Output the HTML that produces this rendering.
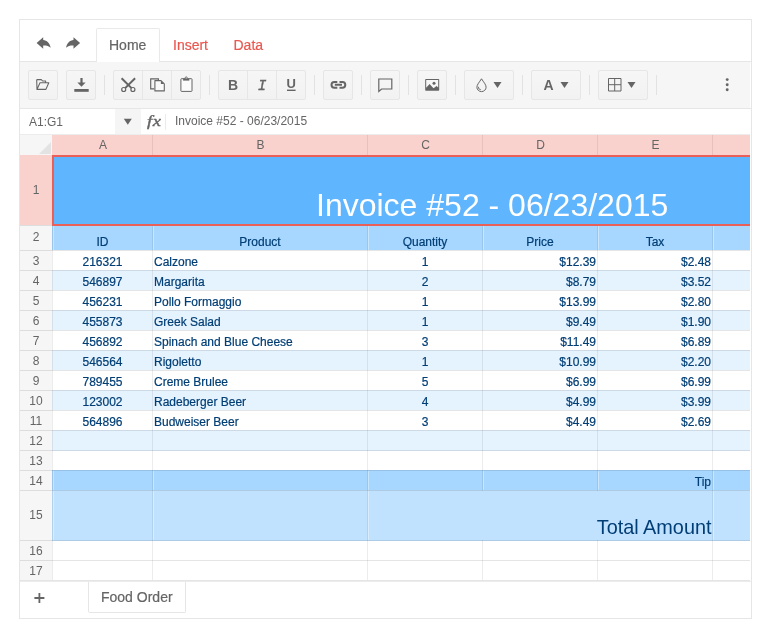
<!DOCTYPE html>
<html><head><meta charset="utf-8"><title>Spreadsheet</title>
<style>
html,body{margin:0;padding:0;background:#fff;}
body{width:770px;height:641px;position:relative;overflow:hidden;font-family:"Liberation Sans",sans-serif;font-size:14px;color:#656565;}
.abs{position:absolute;box-sizing:border-box;}
#ss{left:19px;top:19px;width:733px;height:600px;border:1px solid #e6e6e6;background:#fff;}
#tabline{left:20px;top:61px;width:731px;height:1px;background:#e6e6e6;}
#hometab{left:96px;top:28px;width:64px;height:34px;border:1px solid #e9e9e9;border-bottom:0;border-radius:2px 2px 0 0;background:#fff;}
.tabtxt{-webkit-text-stroke:0.2px currentColor;top:35px;height:20px;line-height:20px;font-size:14px;white-space:nowrap;}
#toolbar{left:20px;top:62px;width:730px;height:46px;background:#f6f6f6;}
#tbline{left:20px;top:108px;width:731px;height:1px;background:#e6e6e6;}
.btn{top:70px;height:30px;width:30px;border:1px solid #e6e6e6;border-radius:2px;background:linear-gradient(#f6f6f6,#f2f2f2);}
.btn svg{position:absolute;left:0;top:0;}
.sep{top:75px;width:1px;height:20px;background:#e2e2e2;}
.cell{font-size:12px;line-height:20px;white-space:nowrap;color:#003e75;overflow:hidden;-webkit-text-stroke:0.2px #003e75;}
.hdr{font-size:12px;color:#656565;text-align:center;background:#f6f6f6;}
.hsel{background:#f9d1cd;}
.gl{background:rgba(0,0,0,.10);}
</style></head><body>
<div id="root" style="position:absolute;left:0;top:0;width:770px;height:641px;will-change:transform;">
<div id="ss" class="abs"></div>
<div id="tabline" class="abs"></div>
<div id="hometab" class="abs"></div>
<div class="abs tabtxt" style="left:109px;color:#656565;">Home</div>
<div class="abs tabtxt" style="left:173px;color:#e9574f;">Insert</div>
<div class="abs tabtxt" style="left:233.5px;color:#e9574f;">Data</div>
<div id="toolbar" class="abs"></div>
<div id="tbline" class="abs"></div>

<div class="abs btn" style="left:28px;width:30px;"></div>
<div class="abs btn" style="left:66px;width:30px;"></div>
<div class="abs btn" style="left:113px;width:30px;border-radius:2px 0 0 2px;"></div>
<div class="abs btn" style="left:142px;width:30px;border-radius:0;"></div>
<div class="abs btn" style="left:171px;width:30px;border-radius:0 2px 2px 0;"></div>
<div class="abs btn" style="left:218px;width:30px;border-radius:2px 0 0 2px;"></div>
<div class="abs btn" style="left:247px;width:30px;border-radius:0;"></div>
<div class="abs btn" style="left:276px;width:30px;border-radius:0 2px 2px 0;"></div>
<div class="abs btn" style="left:323px;width:30px;"></div>
<div class="abs btn" style="left:370px;width:30px;"></div>
<div class="abs btn" style="left:417px;width:30px;"></div>
<div class="abs btn" style="left:464px;width:50px;"></div>
<div class="abs btn" style="left:531px;width:50px;"></div>
<div class="abs btn" style="left:598px;width:50px;"></div>
<div class="abs sep" style="left:104px"></div>
<div class="abs sep" style="left:209px"></div>
<div class="abs sep" style="left:314px"></div>
<div class="abs sep" style="left:361px"></div>
<div class="abs sep" style="left:408px"></div>
<div class="abs sep" style="left:455px"></div>
<div class="abs sep" style="left:522px"></div>
<div class="abs sep" style="left:589px"></div>
<div class="abs sep" style="left:656px"></div>
<div class="abs" style="left:29px;top:110px;height:25px;line-height:25px;font-size:12px;color:#656565;">A1:G1</div>
<div class="abs" style="left:115px;top:109px;width:26px;height:25px;background:#f5f5f5;"></div>
<div class="abs" style="left:146.5px;top:110.4px;transform:scale(1.06,.87);letter-spacing:.5px;transform-origin:0 0;height:25px;line-height:25px;font-size:17.5px;font-style:italic;-webkit-text-stroke:0.45px #656565;color:#656565;font-family:'Liberation Serif',serif;">fx</div>
<div class="abs" style="left:165px;top:114px;width:1px;height:16px;background:#ebebeb;"></div>
<div class="abs" style="left:175px;top:109px;height:25px;line-height:25px;font-size:12px;color:#656565;white-space:nowrap;">Invoice #52 - 06/23/2015</div>
<div class="abs" style="left:20px;top:134px;width:730px;height:1px;background:#ececec;"></div>
<div class="abs" style="left:20px;top:135px;width:32px;height:20px;background:#f6f6f6;"></div>
<svg class="abs" style="left:20px;top:135px" width="32" height="20"><path d="M31 7 V19 H19 Z" fill="#e3e3e3"/></svg>
<div class="abs hdr hsel" style="left:52px;top:135px;width:100px;height:20px;line-height:20px;padding-left:2px;">A</div>
<div class="abs hdr hsel" style="left:152px;top:135px;width:215px;height:20px;line-height:20px;padding-left:2px;">B</div>
<div class="abs hdr hsel" style="left:367px;top:135px;width:115px;height:20px;line-height:20px;padding-left:2px;">C</div>
<div class="abs hdr hsel" style="left:482px;top:135px;width:115px;height:20px;line-height:20px;padding-left:2px;">D</div>
<div class="abs hdr hsel" style="left:597px;top:135px;width:115px;height:20px;line-height:20px;padding-left:2px;">E</div>
<div class="abs hdr hsel" style="left:712px;top:135px;width:38px;height:20px;line-height:20px;padding-left:2px;"></div>
<div class="abs hdr hsel" style="left:20px;top:155px;width:32px;height:70px;line-height:70px;">1</div>
<div class="abs hdr" style="left:20px;top:225px;width:32px;height:25px;line-height:25px;">2</div>
<div class="abs hdr" style="left:20px;top:250px;width:32px;height:20px;line-height:22px;">3</div>
<div class="abs hdr" style="left:20px;top:270px;width:32px;height:20px;line-height:22px;">4</div>
<div class="abs hdr" style="left:20px;top:290px;width:32px;height:20px;line-height:22px;">5</div>
<div class="abs hdr" style="left:20px;top:310px;width:32px;height:20px;line-height:22px;">6</div>
<div class="abs hdr" style="left:20px;top:330px;width:32px;height:20px;line-height:22px;">7</div>
<div class="abs hdr" style="left:20px;top:350px;width:32px;height:20px;line-height:22px;">8</div>
<div class="abs hdr" style="left:20px;top:370px;width:32px;height:20px;line-height:22px;">9</div>
<div class="abs hdr" style="left:20px;top:390px;width:32px;height:20px;line-height:22px;">10</div>
<div class="abs hdr" style="left:20px;top:410px;width:32px;height:20px;line-height:22px;">11</div>
<div class="abs hdr" style="left:20px;top:430px;width:32px;height:20px;line-height:22px;">12</div>
<div class="abs hdr" style="left:20px;top:450px;width:32px;height:20px;line-height:22px;">13</div>
<div class="abs hdr" style="left:20px;top:470px;width:32px;height:20px;line-height:22px;">14</div>
<div class="abs hdr" style="left:20px;top:490px;width:32px;height:50px;line-height:50px;">15</div>
<div class="abs hdr" style="left:20px;top:540px;width:32px;height:20px;line-height:22px;">16</div>
<div class="abs hdr" style="left:20px;top:560px;width:32px;height:20px;line-height:22px;">17</div>
<div class="abs" style="left:52px;top:155px;width:698px;height:71px;background:#60b5ff;"></div>
<div class="abs" style="left:52px;top:225px;width:698px;height:26px;background:#a7d6ff;"></div>
<div class="abs" style="left:52px;top:250px;width:698px;height:20px;background:#fff;"></div>
<div class="abs" style="left:52px;top:270px;width:698px;height:21px;background:#e5f3ff;"></div>
<div class="abs" style="left:52px;top:290px;width:698px;height:20px;background:#fff;"></div>
<div class="abs" style="left:52px;top:310px;width:698px;height:21px;background:#e5f3ff;"></div>
<div class="abs" style="left:52px;top:330px;width:698px;height:20px;background:#fff;"></div>
<div class="abs" style="left:52px;top:350px;width:698px;height:21px;background:#e5f3ff;"></div>
<div class="abs" style="left:52px;top:370px;width:698px;height:20px;background:#fff;"></div>
<div class="abs" style="left:52px;top:390px;width:698px;height:21px;background:#e5f3ff;"></div>
<div class="abs" style="left:52px;top:410px;width:698px;height:20px;background:#fff;"></div>
<div class="abs" style="left:52px;top:430px;width:698px;height:21px;background:#e5f3ff;"></div>
<div class="abs" style="left:52px;top:470px;width:698px;height:21px;background:#a7d6ff;"></div>
<div class="abs" style="left:52px;top:490px;width:698px;height:51px;background:#c1e2ff;"></div>
<div class="abs gl" style="left:20px;top:225px;width:730px;height:1px;"></div>
<div class="abs gl" style="left:20px;top:250px;width:730px;height:1px;"></div>
<div class="abs gl" style="left:20px;top:270px;width:730px;height:1px;"></div>
<div class="abs gl" style="left:20px;top:290px;width:730px;height:1px;"></div>
<div class="abs gl" style="left:20px;top:310px;width:730px;height:1px;"></div>
<div class="abs gl" style="left:20px;top:330px;width:730px;height:1px;"></div>
<div class="abs gl" style="left:20px;top:350px;width:730px;height:1px;"></div>
<div class="abs gl" style="left:20px;top:370px;width:730px;height:1px;"></div>
<div class="abs gl" style="left:20px;top:390px;width:730px;height:1px;"></div>
<div class="abs gl" style="left:20px;top:410px;width:730px;height:1px;"></div>
<div class="abs gl" style="left:20px;top:430px;width:730px;height:1px;"></div>
<div class="abs gl" style="left:20px;top:450px;width:730px;height:1px;"></div>
<div class="abs gl" style="left:20px;top:470px;width:730px;height:1px;"></div>
<div class="abs gl" style="left:20px;top:490px;width:730px;height:1px;"></div>
<div class="abs gl" style="left:20px;top:540px;width:730px;height:1px;"></div>
<div class="abs gl" style="left:20px;top:560px;width:730px;height:1px;"></div>
<div class="abs gl" style="left:20px;top:580px;width:730px;height:1px;"></div>
<div class="abs" style="background:rgba(0,0,0,.075);left:52px;top:155px;width:1px;height:425px;"></div>
<div class="abs" style="left:53px;top:226px;width:1px;height:24px;background:rgba(255,255,255,.4)"></div>
<div class="abs" style="left:53px;top:471px;width:1px;height:19px;background:rgba(255,255,255,.4)"></div>
<div class="abs" style="left:53px;top:491px;width:1px;height:49px;background:rgba(255,255,255,.4)"></div>
<div class="abs" style="background:rgba(0,0,0,.075);left:152px;top:135px;width:1px;height:445px;"></div>
<div class="abs" style="left:153px;top:226px;width:1px;height:24px;background:rgba(255,255,255,.4)"></div>
<div class="abs" style="left:153px;top:471px;width:1px;height:19px;background:rgba(255,255,255,.4)"></div>
<div class="abs" style="left:153px;top:491px;width:1px;height:49px;background:rgba(255,255,255,.4)"></div>
<div class="abs" style="background:rgba(0,0,0,.075);left:367px;top:135px;width:1px;height:445px;"></div>
<div class="abs" style="left:368px;top:226px;width:1px;height:24px;background:rgba(255,255,255,.4)"></div>
<div class="abs" style="left:368px;top:471px;width:1px;height:19px;background:rgba(255,255,255,.4)"></div>
<div class="abs" style="left:368px;top:491px;width:1px;height:49px;background:rgba(255,255,255,.4)"></div>
<div class="abs" style="background:rgba(0,0,0,.075);left:482px;top:135px;width:1px;height:445px;"></div>
<div class="abs" style="left:483px;top:226px;width:1px;height:24px;background:rgba(255,255,255,.4)"></div>
<div class="abs" style="left:483px;top:471px;width:1px;height:19px;background:rgba(255,255,255,.4)"></div>
<div class="abs" style="left:483px;top:491px;width:1px;height:49px;background:rgba(255,255,255,.4)"></div>
<div class="abs" style="background:rgba(0,0,0,.075);left:597px;top:135px;width:1px;height:445px;"></div>
<div class="abs" style="left:598px;top:226px;width:1px;height:24px;background:rgba(255,255,255,.4)"></div>
<div class="abs" style="left:598px;top:471px;width:1px;height:19px;background:rgba(255,255,255,.4)"></div>
<div class="abs" style="left:598px;top:491px;width:1px;height:49px;background:rgba(255,255,255,.4)"></div>
<div class="abs" style="background:rgba(0,0,0,.075);left:712px;top:135px;width:1px;height:445px;"></div>
<div class="abs" style="left:713px;top:226px;width:1px;height:24px;background:rgba(255,255,255,.4)"></div>
<div class="abs" style="left:713px;top:471px;width:1px;height:19px;background:rgba(255,255,255,.4)"></div>
<div class="abs" style="left:713px;top:491px;width:1px;height:49px;background:rgba(255,255,255,.4)"></div>
<div class="abs" style="left:52px;top:155px;width:698px;height:71px;background:#60b5ff;border:2px solid #ea5f57;border-right:0;"></div>
<div class="abs" style="left:316px;top:185px;height:40px;line-height:40px;font-size:32px;color:#fff;white-space:nowrap;">Invoice #52 - 06/23/2015</div>
<div class="abs cell" style="left:53px;top:225px;width:99px;height:25px;text-align:center;padding:0 2px 0 2px;line-height:34px;">ID</div>
<div class="abs cell" style="left:153px;top:225px;width:214px;height:25px;text-align:center;padding:0 2px 0 2px;line-height:34px;">Product</div>
<div class="abs cell" style="left:368px;top:225px;width:114px;height:25px;text-align:center;padding:0 2px 0 2px;line-height:34px;">Quantity</div>
<div class="abs cell" style="left:483px;top:225px;width:114px;height:25px;text-align:center;padding:0 2px 0 2px;line-height:34px;">Price</div>
<div class="abs cell" style="left:598px;top:225px;width:114px;height:25px;text-align:center;padding:0 2px 0 2px;line-height:34px;">Tax</div>
<div class="abs cell" style="left:53px;top:250px;width:99px;height:20px;text-align:center;padding:0 2px 0 2px;line-height:25px;">216321</div>
<div class="abs cell" style="left:153px;top:250px;width:214px;height:20px;text-align:left;padding:0 2px 0 1px;line-height:25px;">Calzone</div>
<div class="abs cell" style="left:368px;top:250px;width:114px;height:20px;text-align:center;padding:0 2px 0 2px;line-height:25px;">1</div>
<div class="abs cell" style="left:483px;top:250px;width:114px;height:20px;text-align:right;padding:0 1px 0 1px;line-height:25px;">$12.39</div>
<div class="abs cell" style="left:598px;top:250px;width:114px;height:20px;text-align:right;padding:0 1px 0 1px;line-height:25px;">$2.48</div>
<div class="abs cell" style="left:53px;top:270px;width:99px;height:20px;text-align:center;padding:0 2px 0 2px;line-height:25px;">546897</div>
<div class="abs cell" style="left:153px;top:270px;width:214px;height:20px;text-align:left;padding:0 2px 0 1px;line-height:25px;">Margarita</div>
<div class="abs cell" style="left:368px;top:270px;width:114px;height:20px;text-align:center;padding:0 2px 0 2px;line-height:25px;">2</div>
<div class="abs cell" style="left:483px;top:270px;width:114px;height:20px;text-align:right;padding:0 1px 0 1px;line-height:25px;">$8.79</div>
<div class="abs cell" style="left:598px;top:270px;width:114px;height:20px;text-align:right;padding:0 1px 0 1px;line-height:25px;">$3.52</div>
<div class="abs cell" style="left:53px;top:290px;width:99px;height:20px;text-align:center;padding:0 2px 0 2px;line-height:25px;">456231</div>
<div class="abs cell" style="left:153px;top:290px;width:214px;height:20px;text-align:left;padding:0 2px 0 1px;line-height:25px;">Pollo Formaggio</div>
<div class="abs cell" style="left:368px;top:290px;width:114px;height:20px;text-align:center;padding:0 2px 0 2px;line-height:25px;">1</div>
<div class="abs cell" style="left:483px;top:290px;width:114px;height:20px;text-align:right;padding:0 1px 0 1px;line-height:25px;">$13.99</div>
<div class="abs cell" style="left:598px;top:290px;width:114px;height:20px;text-align:right;padding:0 1px 0 1px;line-height:25px;">$2.80</div>
<div class="abs cell" style="left:53px;top:310px;width:99px;height:20px;text-align:center;padding:0 2px 0 2px;line-height:25px;">455873</div>
<div class="abs cell" style="left:153px;top:310px;width:214px;height:20px;text-align:left;padding:0 2px 0 1px;line-height:25px;">Greek Salad</div>
<div class="abs cell" style="left:368px;top:310px;width:114px;height:20px;text-align:center;padding:0 2px 0 2px;line-height:25px;">1</div>
<div class="abs cell" style="left:483px;top:310px;width:114px;height:20px;text-align:right;padding:0 1px 0 1px;line-height:25px;">$9.49</div>
<div class="abs cell" style="left:598px;top:310px;width:114px;height:20px;text-align:right;padding:0 1px 0 1px;line-height:25px;">$1.90</div>
<div class="abs cell" style="left:53px;top:330px;width:99px;height:20px;text-align:center;padding:0 2px 0 2px;line-height:25px;">456892</div>
<div class="abs cell" style="left:153px;top:330px;width:214px;height:20px;text-align:left;padding:0 2px 0 1px;line-height:25px;">Spinach and Blue Cheese</div>
<div class="abs cell" style="left:368px;top:330px;width:114px;height:20px;text-align:center;padding:0 2px 0 2px;line-height:25px;">3</div>
<div class="abs cell" style="left:483px;top:330px;width:114px;height:20px;text-align:right;padding:0 1px 0 1px;line-height:25px;">$11.49</div>
<div class="abs cell" style="left:598px;top:330px;width:114px;height:20px;text-align:right;padding:0 1px 0 1px;line-height:25px;">$6.89</div>
<div class="abs cell" style="left:53px;top:350px;width:99px;height:20px;text-align:center;padding:0 2px 0 2px;line-height:25px;">546564</div>
<div class="abs cell" style="left:153px;top:350px;width:214px;height:20px;text-align:left;padding:0 2px 0 1px;line-height:25px;">Rigoletto</div>
<div class="abs cell" style="left:368px;top:350px;width:114px;height:20px;text-align:center;padding:0 2px 0 2px;line-height:25px;">1</div>
<div class="abs cell" style="left:483px;top:350px;width:114px;height:20px;text-align:right;padding:0 1px 0 1px;line-height:25px;">$10.99</div>
<div class="abs cell" style="left:598px;top:350px;width:114px;height:20px;text-align:right;padding:0 1px 0 1px;line-height:25px;">$2.20</div>
<div class="abs cell" style="left:53px;top:370px;width:99px;height:20px;text-align:center;padding:0 2px 0 2px;line-height:25px;">789455</div>
<div class="abs cell" style="left:153px;top:370px;width:214px;height:20px;text-align:left;padding:0 2px 0 1px;line-height:25px;">Creme Brulee</div>
<div class="abs cell" style="left:368px;top:370px;width:114px;height:20px;text-align:center;padding:0 2px 0 2px;line-height:25px;">5</div>
<div class="abs cell" style="left:483px;top:370px;width:114px;height:20px;text-align:right;padding:0 1px 0 1px;line-height:25px;">$6.99</div>
<div class="abs cell" style="left:598px;top:370px;width:114px;height:20px;text-align:right;padding:0 1px 0 1px;line-height:25px;">$6.99</div>
<div class="abs cell" style="left:53px;top:390px;width:99px;height:20px;text-align:center;padding:0 2px 0 2px;line-height:25px;">123002</div>
<div class="abs cell" style="left:153px;top:390px;width:214px;height:20px;text-align:left;padding:0 2px 0 1px;line-height:25px;">Radeberger Beer</div>
<div class="abs cell" style="left:368px;top:390px;width:114px;height:20px;text-align:center;padding:0 2px 0 2px;line-height:25px;">4</div>
<div class="abs cell" style="left:483px;top:390px;width:114px;height:20px;text-align:right;padding:0 1px 0 1px;line-height:25px;">$4.99</div>
<div class="abs cell" style="left:598px;top:390px;width:114px;height:20px;text-align:right;padding:0 1px 0 1px;line-height:25px;">$3.99</div>
<div class="abs cell" style="left:53px;top:410px;width:99px;height:20px;text-align:center;padding:0 2px 0 2px;line-height:25px;">564896</div>
<div class="abs cell" style="left:153px;top:410px;width:214px;height:20px;text-align:left;padding:0 2px 0 1px;line-height:25px;">Budweiser Beer</div>
<div class="abs cell" style="left:368px;top:410px;width:114px;height:20px;text-align:center;padding:0 2px 0 2px;line-height:25px;">3</div>
<div class="abs cell" style="left:483px;top:410px;width:114px;height:20px;text-align:right;padding:0 1px 0 1px;line-height:25px;">$4.49</div>
<div class="abs cell" style="left:598px;top:410px;width:114px;height:20px;text-align:right;padding:0 1px 0 1px;line-height:25px;">$2.69</div>
<div class="abs cell" style="left:598px;top:470px;width:114px;height:20px;text-align:right;padding:0 1px 0 1px;line-height:25px;">Tip</div>
<div class="abs" style="left:369px;top:491px;width:343px;height:49px;background:#c1e2ff;"></div>
<div class="abs" style="left:592px;top:490px;width:120px;height:50px;text-align:right;font-size:19.85px;padding-right:.5px;line-height:74px;color:#003e75;white-space:nowrap;overflow:hidden;">Total Amount</div>
<div class="abs" style="left:88px;top:581px;width:98px;height:32px;border:1px solid #e6e6e6;border-top:0;border-radius:0 0 2px 2px;background:#fff;"></div>
<div class="abs" style="left:20px;top:581px;width:731px;height:1px;background:#ececec;"></div>
<div class="abs" style="left:101px;top:587px;height:20px;line-height:20px;font-size:14px;color:#656565;white-space:nowrap;-webkit-text-stroke:0.2px #656565;">Food Order</div>
<svg class="abs" style="left:0;top:0;pointer-events:none" width="770" height="641" viewBox="0 0 770 641"><path d="M43.2 37.2 L36.6 42.9 L43.2 48.7 L43.2 45.6 C46 45.4 48.6 46 50.7 47.7 C49.6 43 47 40.3 43.2 40 Z" fill="#656565"/><path transform="translate(116.7 0) scale(-1 1)" d="M43.2 37.2 L36.6 42.9 L43.2 48.7 L43.2 45.6 C46 45.4 48.6 46 50.7 47.7 C49.6 43 47 40.3 43.2 40 Z" fill="#656565"/><path d="M37 89.4 L36.7 80.3 Q36.7 79.6 37.4 79.6 L41.3 79.6 L42.6 81 L45.6 81 L45.6 82.6 M37 89.4 L40 82.7 L48.8 82.7 L45.9 89.4 Z" fill="none" stroke="#656565" stroke-width="1.1" stroke-linejoin="round"/><path d="M80.4 78 H82.6 V82.5 H85.6 L81.5 86.7 L77.4 82.5 H80.4 Z" fill="#656565"/><rect x="74.3" y="89" width="14.4" height="2.8" fill="#656565"/><path d="M121.6 78.2 L131.8 88.4 M135.1 78.2 L124.9 88.4" stroke="#656565" stroke-width="2" fill="none"/><circle cx="123.7" cy="89.5" r="2" fill="#f7f7f7" stroke="#656565" stroke-width="1.2"/><circle cx="132.9" cy="89.5" r="2" fill="#f7f7f7" stroke="#656565" stroke-width="1.2"/><path d="M154.2 88.9 H150.7 V78.8 H158.4 V80.2" fill="none" stroke="#656565" stroke-width="1.15"/><path d="M154.9 80.6 H161 L164.3 83.9 V90.9 H154.9 Z" fill="#fafafa" stroke="#656565" stroke-width="1.1" stroke-linejoin="round"/><path d="M160.9 80.8 V84 H164.1 Z" fill="#656565"/><rect x="180.9" y="78.7" width="11.1" height="12.7" rx="0.6" fill="#fbfbfb" stroke="#656565" stroke-width="1"/><rect x="183.1" y="78.7" width="6.2" height="1.9" fill="#656565"/><circle cx="186.2" cy="78" r="1.1" fill="#f4f4f4" stroke="#656565" stroke-width="0.9"/><text x="233.1" y="90" text-anchor="middle" font-family="Liberation Sans,sans-serif" font-weight="bold" font-size="14" fill="#656565">B</text><text x="262.2" y="90" text-anchor="middle" font-family="Liberation Mono,monospace" font-style="italic" font-size="14.5" fill="#656565" stroke="#656565" stroke-width="0.35">I</text><text x="291.3" y="88.2" text-anchor="middle" font-family="Liberation Sans,sans-serif" font-weight="bold" font-size="13" fill="#656565">U</text><rect x="287" y="89.6" width="8.6" height="1.4" fill="#656565"/><path d="M337.3 81.9 H334.4 a2.9 2.9 0 0 0 0 5.8 H337.3 M339.5 81.9 H342.4 a2.9 2.9 0 0 1 0 5.8 H339.5 M334.8 84.8 H342" fill="none" stroke="#656565" stroke-width="2"/><path d="M378.8 79 H391.8 V89 H381.6 L378.8 91.4 Z" fill="none" stroke="#656565" stroke-width="1.2" stroke-linejoin="miter"/><rect x="425.2" y="78.9" width="14" height="11.9" rx="0.8" fill="#656565"/><path d="M426.2 80 H438.2 V87.6 L436.6 85.9 L433.5 88.2 L429.6 84 L426.2 87.7 Z" fill="#f7f7f7"/><circle cx="434" cy="83.3" r="1.5" fill="#656565"/><path d="M481.5 78.8 C479.3 82.3 476.9 84.6 476.9 87.2 a4.6 4.4 0 0 0 9.2 0 C486.1 84.6 483.7 82.3 481.5 78.8 Z" fill="none" stroke="#656565" stroke-width="1"/><path d="M478.4 86.8 a2.6 2.6 0 0 0 2.4 2.9" fill="none" stroke="#656565" stroke-width="0.9"/><path d="M493.5 82 h8 l-4 6 Z" fill="#656565"/><text x="548.6" y="89.8" text-anchor="middle" font-family="Liberation Sans,sans-serif" font-weight="bold" font-size="14" fill="#656565">A</text><path d="M560.5 82 h8 l-4 6 Z" fill="#656565"/><path d="M608.5 78.5 H621 V91 H608.5 Z M614.7 78.5 V91 M608.5 84.7 H621" fill="none" stroke="#656565" stroke-width="1"/><path d="M627.5 82 h8 l-4 6 Z" fill="#656565"/><circle cx="727.2" cy="79.6" r="1.45" fill="#656565"/><circle cx="727.2" cy="84.7" r="1.45" fill="#656565"/><circle cx="727.2" cy="89.7" r="1.45" fill="#656565"/><path d="M34.4 598 H44.4 M39.4 593 V603" stroke="#656565" stroke-width="1.8" fill="none"/><path d="M123.8 118.8 h8 l-4 6 Z" fill="#656565"/></svg>
</div>
</body></html>
